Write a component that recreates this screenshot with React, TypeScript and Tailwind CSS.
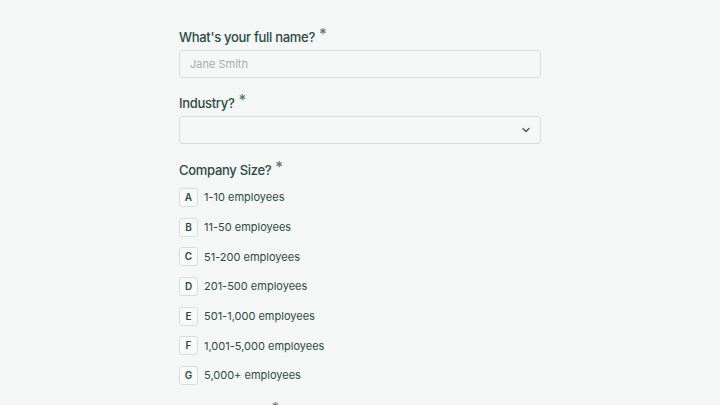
import React from "react";

const options = [
  ["A", "1-10 employees"],
  ["B", "11-50 employees"],
  ["C", "51-200 employees"],
  ["D", "201-500 employees"],
  ["E", "501-1,000 employees"],
  ["F", "1,001-5,000 employees"],
  ["G", "5,000+ employees"],
];

function Label({ text }: { text: string }) {
  return (
    <div className="shrink-0 flex items-start text-[13px] leading-[20px] font-medium tracking-[-0.3px] text-[#2c4a44] h-[20px]">
      <span>{text}</span>
      <span className="ml-[4px] text-[15px] leading-[14px] text-[#5d7a73]">*</span>
    </div>
  );
}

export default function App() {
  return (
    <div
      className="w-[720px] h-[405px] overflow-hidden bg-[#f5f7f6] flex justify-center items-start"
      style={{ fontFamily: "Inter, 'Noto Sans', sans-serif" }}
    >
      <div className="w-[362px] pt-[27px] flex flex-col shrink-0">
        <Label text="What's your full name?" />
        <div className="shrink-0 mt-[3px] h-[28px] rounded-[3px] border border-[#cfe2d9] bg-[#f6f8f7] flex items-center px-[10px] text-[11px] text-[#a3aeaa]">
          Jane Smith
        </div>
        <div className="mt-[15px] shrink-0">
          <Label text="Industry?" />
        </div>
        <div className="shrink-0 mt-[3px] h-[28px] rounded-[3px] border border-[#cfe2d9] bg-[#f6f8f7] flex items-center justify-end px-[8px]">
          <svg width="12" height="12" viewBox="0 0 24 24" fill="none" stroke="#3c5a54" strokeWidth="2.6" strokeLinecap="round" strokeLinejoin="round">
            <path d="M6 9l6 6 6-6" />
          </svg>
        </div>
        <div className="mt-[16px] shrink-0">
          <Label text="Company Size?" />
        </div>
        <div className="mt-[8px] flex flex-col gap-[10.7px] shrink-0">
          {options.map(([k, v]) => (
            <div key={k} className="flex items-center h-[19px] shrink-0">
              <div className="w-[19px] h-[19px] rounded-[3px] border border-[#cfe2d9] bg-[#f8faf9] flex items-center justify-center text-[10px] font-semibold text-[#2c4a44]">
                {k}
              </div>
              <span className="ml-[6px] text-[11px] text-[#2c4a44]">{v}</span>
            </div>
          ))}
        </div>
        <div className="mt-[16px] shrink-0">
          <Label text="Your Job Title?" />
        </div>
      </div>
    </div>
  );
}
